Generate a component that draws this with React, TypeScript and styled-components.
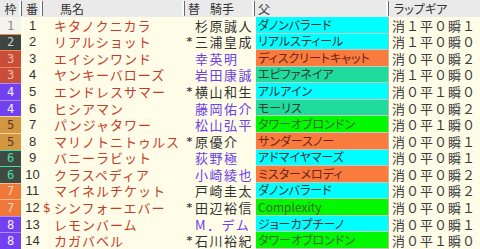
import styled, { createGlobalStyle } from 'styled-components';

const GlobalStyle = createGlobalStyle`
  html, body {
    margin: 0;
    padding: 0;
    background: #fffde8;
  }
  body {
    font-family: 'Noto Sans CJK JP', 'Noto Sans', sans-serif;
  }
`;

type Horse = {
  waku: number;
  no: number;
  mark?: string;
  name: string;
  change?: boolean;
  jockey: string;
  jockeyBlue?: boolean;
  sire: string;
  sireType: 'cyan' | 'orange' | 'teal' | 'green';
  lap: string;
};

const horses: Horse[] = [
  { waku: 1, no: 1, name: 'キタノクニカラ', jockey: '杉原誠人', sire: 'ダノンバラード', sireType: 'cyan', lap: '消１平０瞬１' },
  { waku: 2, no: 2, name: 'リアルショット', change: true, jockey: '三浦皇成', sire: 'リアルスティール', sireType: 'cyan', lap: '消１平０瞬０' },
  { waku: 3, no: 3, name: 'エイシンワンド', jockey: '幸英明', jockeyBlue: true, sire: 'ディスクリートキャット', sireType: 'orange', lap: '消０平０瞬２' },
  { waku: 3, no: 4, name: 'ヤンキーバローズ', jockey: '岩田康誠', jockeyBlue: true, sire: 'エピファネイア', sireType: 'teal', lap: '消１平０瞬０' },
  { waku: 4, no: 5, name: 'エンドレスサマー', change: true, jockey: '横山和生', sire: 'アルアイン', sireType: 'cyan', lap: '消０平１瞬０' },
  { waku: 4, no: 6, name: 'ヒシアマン', jockey: '藤岡佑介', jockeyBlue: true, sire: 'モーリス', sireType: 'teal', lap: '消０平０瞬２' },
  { waku: 5, no: 7, name: 'パンジャタワー', jockey: '松山弘平', jockeyBlue: true, sire: 'タワーオブロンドン', sireType: 'green', lap: '消０平１瞬０' },
  { waku: 5, no: 8, name: 'マリノトニトゥルス', change: true, jockey: '原優介', sire: 'サンダースノー', sireType: 'orange', lap: '消０平０瞬１' },
  { waku: 6, no: 9, name: 'バニーラビット', jockey: '荻野極', jockeyBlue: true, sire: 'アドマイヤマーズ', sireType: 'cyan', lap: '消０平０瞬１' },
  { waku: 6, no: 10, name: 'クラスペディア', jockey: '小崎綾也', jockeyBlue: true, sire: 'ミスターメロディ', sireType: 'orange', lap: '消０平０瞬２' },
  { waku: 7, no: 11, name: 'マイネルチケット', jockey: '戸崎圭太', sire: 'ダノンバラード', sireType: 'cyan', lap: '消０平０瞬２' },
  { waku: 7, no: 12, mark: '$', name: 'シンフォーエバー', change: true, jockey: '田辺裕信', sire: 'Complexity', sireType: 'green', lap: '消０平０瞬１' },
  { waku: 8, no: 13, name: 'レモンバーム', jockey: 'M．デム', jockeyBlue: true, sire: 'ジョーカプチーノ', sireType: 'cyan', lap: '消０平０瞬１' },
  { waku: 8, no: 14, name: 'カガバベル', change: true, jockey: '石川裕紀', sire: 'タワーオブロンドン', sireType: 'green', lap: '消０平１瞬０' },
];

const wakuColors: Record<number, { bg: string; fg: string; line: string }> = {
  1: { bg: '#f4f4ec', fg: '#8a8a84', line: '#f4f4ec' },
  2: { bg: '#3d4540', fg: '#d0d0d0', line: '#f08a40' },
  3: { bg: '#c84e3a', fg: '#f4c0a8', line: '#f08a50' },
  4: { bg: '#7240f0', fg: '#f0ecff', line: '#a890f8' },
  5: { bg: '#d4963f', fg: '#4a4038', line: '#f0d8a8' },
  6: { bg: '#3e4a42', fg: '#48e0a4', line: '#40e0a0' },
  7: { bg: '#f07838', fg: '#f8d8c0', line: '#f8b890' },
  8: { bg: '#7240f0', fg: '#f4f0ff', line: '#a890f8' },
};

const sireColors = {
  cyan: { bg: '#00ffff', fg: '#333333' },
  orange: { bg: '#f97b3d', fg: '#6a2418' },
  teal: { bg: '#20dc9c', fg: '#2e3a34' },
  green: { bg: '#00f800', fg: '#3c6a28' },
};

const COLS = '22px 21px 142px 9px 61px 134px 91px';

const Table = styled.div`
  width: 480px;
  height: 249px;
  display: flex;
  flex-direction: column;
  background: #fffde8;
  overflow: hidden;
  line-height: 1;
`;

const Header = styled.div`
  height: 17px;
  display: grid;
  grid-template-columns: 22px 21px 142px 70px 134px 91px;
  background: #eaeaea;
  flex-shrink: 0;
`;

const HeadCell = styled.div<{ $align?: string; $pad?: number }>`
  display: flex;
  align-items: center;
  justify-content: ${p => p.$align || 'flex-start'};
  padding-left: ${p => p.$pad ?? 0}px;
  font-size: 12px;
  color: #333;
  border-right: 1px solid #6a6a6a;
  box-shadow: inset -2px 0 0 #fafafa;
  margin: 1px 0;
  white-space: nowrap;
  font-feature-settings: 'palt';

  &:last-child {
    border-right: none;
    box-shadow: none;
  }
`;

const Gap = styled.span`
  display: inline-block;
  width: 10px;
`;

const Body = styled.div`
  flex: 1;
  min-height: 0;
  display: grid;
  grid-template-rows: repeat(14, minmax(0, 1fr));
`;

const Row = styled.div`
  display: grid;
  grid-template-columns: ${COLS};
  align-items: stretch;
  min-height: 0;
  overflow: hidden;
`;

const Waku = styled.div<{ $bg: string; $fg: string; $line: string }>`
  background: ${p => p.$bg};
  color: ${p => p.$fg};
  border-top: 1px solid ${p => p.$line};
  margin-right: 1px;
  display: flex;
  align-items: center;
  justify-content: center;
  font-family: 'DejaVu Sans Mono', monospace;
  font-size: 12px;
`;

const Num = styled.div`
  display: flex;
  align-items: center;
  justify-content: center;
  font-family: 'Liberation Sans', sans-serif;
  font-size: 13px;
  color: #333;
`;

const Name = styled.div`
  display: flex;
  align-items: center;
  font-size: 13px;
  letter-spacing: 1px;
  color: #c23c28;
  white-space: nowrap;
`;

const Mark = styled.span`
  display: inline-block;
  width: 11px;
  text-align: left;
  font-family: 'DejaVu Sans', sans-serif;
  font-size: 12px;
  letter-spacing: 0;
`;

const Change = styled.div`
  display: flex;
  align-items: center;
  justify-content: center;
  font-family: 'DejaVu Sans', sans-serif;
  font-size: 11px;
  font-weight: bold;
  color: #444;
`;

const Jockey = styled.div<{ $blue?: boolean }>`
  display: flex;
  align-items: center;
  font-size: 13px;
  letter-spacing: 1.5px;
  color: ${p => (p.$blue ? '#6a40ea' : '#333')};
  white-space: nowrap;
  padding-left: 1px;
`;

const Sire = styled.div<{ $bg: string; $fg: string }>`
  background: ${p => p.$bg};
  color: ${p => p.$fg};
  display: flex;
  align-items: center;
  padding-left: 2px;
  margin-left: 1px;
  font-size: 12px;
  font-feature-settings: 'palt';
  white-space: nowrap;
  overflow: hidden;
  border-bottom: 1px solid #c8c8c0;
  border-right: 1px solid #b8b8b0;
`;

const Lap = styled.div`
  display: flex;
  align-items: center;
  padding-left: 3px;
  font-size: 13px;
  letter-spacing: 1px;
  color: #3a3a3a;
  white-space: nowrap;
`;

export default function App() {
  return (
    <>
      <GlobalStyle />
      <Table>
        <Header>
          <HeadCell $align="center">枠</HeadCell>
          <HeadCell $align="center">番</HeadCell>
          <HeadCell $pad={17}>馬名</HeadCell>
          <HeadCell $pad={3}>
            替<Gap />騎手
          </HeadCell>
          <HeadCell $pad={3}>父</HeadCell>
          <HeadCell $pad={5}>ラップギア</HeadCell>
        </Header>
        <Body>
          {horses.map(h => {
            const w = wakuColors[h.waku];
            const s = sireColors[h.sireType];
            return (
              <Row key={h.no}>
                <Waku $bg={w.bg} $fg={w.fg} $line={w.line}>
                  {h.waku}
                </Waku>
                <Num>{h.no}</Num>
                <Name>
                  <Mark>{h.mark || ''}</Mark>
                  {h.name}
                </Name>
                <Change>{h.change ? '*' : ''}</Change>
                <Jockey $blue={h.jockeyBlue}>{h.jockey}</Jockey>
                <Sire $bg={s.bg} $fg={s.fg}>
                  {h.sire}
                </Sire>
                <Lap>{h.lap}</Lap>
              </Row>
            );
          })}
        </Body>
      </Table>
    </>
  );
}
